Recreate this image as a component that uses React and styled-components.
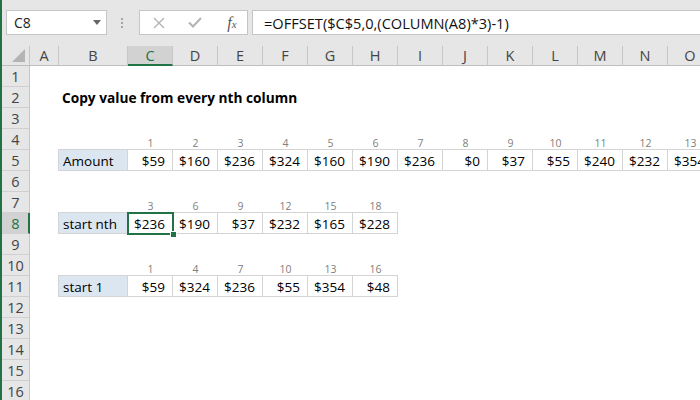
import React from "react";
import styled, { createGlobalStyle, css } from "styled-components";

const GREEN = "#217346";
const HEADER_BG = "#e6e6e6";
const HEADER_ACTIVE = "#d2d2d2";
const LINE = "#c6c6c6";
const CELL_LINE = "#d4d4d4";

const GlobalStyle = createGlobalStyle`
  html, body {
    margin: 0;
    padding: 0;
    background: #fff;
  }
  body {
    font-family: "Open Sans", "Liberation Sans", sans-serif;
  }
`;

const columns = ["A", "B", "C", "D", "E", "F", "G", "H", "I", "J", "K", "L", "M", "N", "O"];

const amounts = [59, 160, 236, 324, 160, 190, 236, 0, 37, 55, 240, 232, 354];

// row number -> what sits in columns B.. (index 0 = column B)
const sheetRows = {
  2: { title: "Copy value from every nth column" },
  4: { index: amounts.map((_, i) => i + 1) },
  5: { label: "Amount", values: amounts },
  7: { index: [3, 6, 9, 12, 15, 18] },
  8: { label: "start nth", values: [236, 190, 37, 232, 165, 228] },
  10: { index: [1, 4, 7, 10, 13, 16] },
  11: { label: "start 1", values: [59, 324, 236, 55, 354, 48] },
};

const activeCol = "C";
const activeRow = 8;

const Window = styled.div`
  width: 700px;
  height: 400px;
  overflow: hidden;
  display: flex;
  flex-direction: column;
  border-left: 2px solid ${GREEN};
  box-sizing: border-box;
  background: #fff;
`;

const FormulaBar = styled.div`
  height: 46px;
  flex-shrink: 0;
  box-sizing: border-box;
  padding: 10px 0 0 4px;
  display: flex;
  align-items: flex-start;
  background: ${HEADER_BG};
`;

const Box = styled.div`
  height: 25px;
  box-sizing: border-box;
  background: #fff;
  border: 1px solid ${LINE};
  display: flex;
  align-items: center;
`;

const NameBox = styled(Box)`
  width: 101px;
  padding: 0 5px 0 7px;
  justify-content: space-between;
  font-size: 14px;
  color: #222;
`;

const Dots = styled.div`
  width: 3px;
  margin: 8px 15px 0 14px;
  display: flex;
  flex-direction: column;
  gap: 2px;
  span {
    width: 2px;
    height: 2px;
    background: #a6a6a6;
  }
`;

const ButtonBox = styled(Box)`
  width: 109px;
  padding-left: 1px;
  display: grid;
  grid-template-columns: repeat(3, 36px);
  align-items: center;
  justify-items: center;
`;

const Fx = styled.span`
  font-family: "Liberation Serif", "DejaVu Serif", serif;
  font-style: italic;
  color: #595959;
  font-size: 16px;
  line-height: 1;
  margin-left: 2px;
  small {
    font-size: 11px;
  }
`;

const FormulaInput = styled(Box)`
  flex: 1;
  margin: 0 -4px 0 4px;
  padding-left: 11px;
  font-size: 14.6px;
  color: #111;
  white-space: nowrap;
`;

const Sheet = styled.div`
  display: grid;
  grid-template-columns: 28px 29px 69px repeat(13, 45px);
  grid-template-rows: 20px repeat(16, 21px);
  background: #fff;
`;

const Corner = styled.div`
  background: ${HEADER_BG};
  border-right: 1px solid ${LINE};
  border-bottom: 1px solid #bdbdbd;
  display: flex;
  align-items: flex-end;
  justify-content: flex-end;
  padding: 0 4px 3px 0;
`;

const ColHeader = styled.div`
  box-sizing: border-box;
  background: ${(p) => (p.$active ? HEADER_ACTIVE : HEADER_BG)};
  border-right: 1px solid ${LINE};
  border-bottom: ${(p) => (p.$active ? `2px solid ${GREEN}` : "1px solid #bdbdbd")};
  color: ${(p) => (p.$active ? GREEN : "#444")};
  font-size: 14.5px;
  display: flex;
  align-items: center;
  justify-content: center;
  padding-top: ${(p) => (p.$active ? "1px" : "0")};
`;

const RowHeader = styled.div`
  box-sizing: border-box;
  background: ${(p) => (p.$active ? HEADER_ACTIVE : HEADER_BG)};
  border-right: ${(p) => (p.$active ? `2px solid ${GREEN}` : `1px solid ${LINE}`)};
  border-bottom: 1px solid #d0d0d0;
  color: ${(p) => (p.$active ? GREEN : "#444")};
  font-size: 14.5px;
  display: flex;
  align-items: center;
  justify-content: center;
  padding-left: ${(p) => (p.$active ? "1px" : "0")};
`;

const Cell = styled.div`
  position: relative;
  box-sizing: border-box;
  display: flex;
  align-items: flex-end;
  white-space: nowrap;
  line-height: 1;
  font-size: 13.5px;
  color: #000;
  padding-bottom: 2px;
  min-width: 0;

  ${(p) =>
    p.$kind === "title" &&
    css`
      font-weight: 700;
      font-size: 13.7px;
      padding: 0 0 3px 3px;
      overflow: visible;
      z-index: 1;
    `}

  ${(p) =>
    p.$kind === "index" &&
    css`
      justify-content: center;
      font-size: 10.5px;
      color: #808080;
      padding-bottom: 2px;
    `}

  ${(p) =>
    (p.$kind === "label" || p.$kind === "value") &&
    css`
      margin: -1px 0 0 -1px;
      border: 1px solid ${CELL_LINE};
      overflow: hidden;
    `}

  ${(p) =>
    p.$kind === "label" &&
    css`
      background: #dce6f1;
      padding-left: 4px;
    `}

  ${(p) =>
    p.$kind === "value" &&
    css`
      justify-content: flex-end;
      padding-right: 7px;
    `}

  ${(p) =>
    p.$selected &&
    css`
      overflow: visible;
      z-index: 2;
      &::after {
        content: "";
        position: absolute;
        inset: -1px -2px -2px -1px;
        border: 2px solid ${GREEN};
      }
      &::before {
        content: "";
        position: absolute;
        right: -5px;
        bottom: -5px;
        width: 5px;
        height: 5px;
        background: ${GREEN};
        border: 1px solid #fff;
        z-index: 1;
      }
    `}
`;

const money = (n) => `$${n}`;

const CloseIcon = () => (
  <svg width="12" height="12" viewBox="0 0 12 12">
    <path d="M1 1L11 11M11 1L1 11" stroke="#b3b3b3" strokeWidth="1.4" fill="none" />
  </svg>
);

const CheckIcon = () => (
  <svg width="14" height="11" viewBox="0 0 14 11">
    <path d="M1 5.5L5 9.5L13 1" stroke="#b3b3b3" strokeWidth="2" fill="none" />
  </svg>
);

const DropArrow = () => (
  <svg width="8" height="5" viewBox="0 0 8 5">
    <path d="M0 0H8L4 5Z" fill="#666" />
  </svg>
);

const CornerMark = () => (
  <svg width="13" height="13" viewBox="0 0 13 13">
    <path d="M13 0V13H0Z" fill="#b4b4b4" />
  </svg>
);

const renderRow = (r) => {
  const data = sheetRows[r] || {};
  const cells = [];
  columns.forEach((col, ci) => {
    const key = `${col}${r}`;
    const k = ci - 1; // position relative to column B
    if (ci === 0) {
      cells.push(<Cell key={key} />);
      return;
    }
    if (data.title && k === 0) {
      cells.push(
        <Cell key={key} $kind="title">
          {data.title}
        </Cell>
      );
      return;
    }
    if (data.index && k >= 1 && k - 1 < data.index.length) {
      cells.push(
        <Cell key={key} $kind="index">
          {data.index[k - 1]}
        </Cell>
      );
      return;
    }
    if (data.label && k === 0) {
      cells.push(
        <Cell key={key} $kind="label">
          {data.label}
        </Cell>
      );
      return;
    }
    if (data.values && k >= 1 && k - 1 < data.values.length) {
      cells.push(
        <Cell key={key} $kind="value" $selected={col === activeCol && r === activeRow}>
          {money(data.values[k - 1])}
        </Cell>
      );
      return;
    }
    cells.push(<Cell key={key} />);
  });
  return cells;
};

const App = () => {
  const rows = Array.from({ length: 16 }, (_, i) => i + 1);
  return (
    <>
      <GlobalStyle />
      <Window>
        <FormulaBar>
          <NameBox>
            <span>C8</span>
            <DropArrow />
          </NameBox>
          <Dots>
            <span />
            <span />
            <span />
          </Dots>
          <ButtonBox>
            <CloseIcon />
            <CheckIcon />
            <Fx>
              f<small>x</small>
            </Fx>
          </ButtonBox>
          <FormulaInput>=OFFSET($C$5,0,(COLUMN(A8)*3)-1)</FormulaInput>
        </FormulaBar>
        <Sheet>
          <Corner>
            <CornerMark />
          </Corner>
          {columns.map((c) => (
            <ColHeader key={c} $active={c === activeCol}>
              {c}
            </ColHeader>
          ))}
          {rows.map((r) => (
            <React.Fragment key={r}>
              <RowHeader $active={r === activeRow}>{r}</RowHeader>
              {renderRow(r)}
            </React.Fragment>
          ))}
        </Sheet>
      </Window>
    </>
  );
};

export default App;
